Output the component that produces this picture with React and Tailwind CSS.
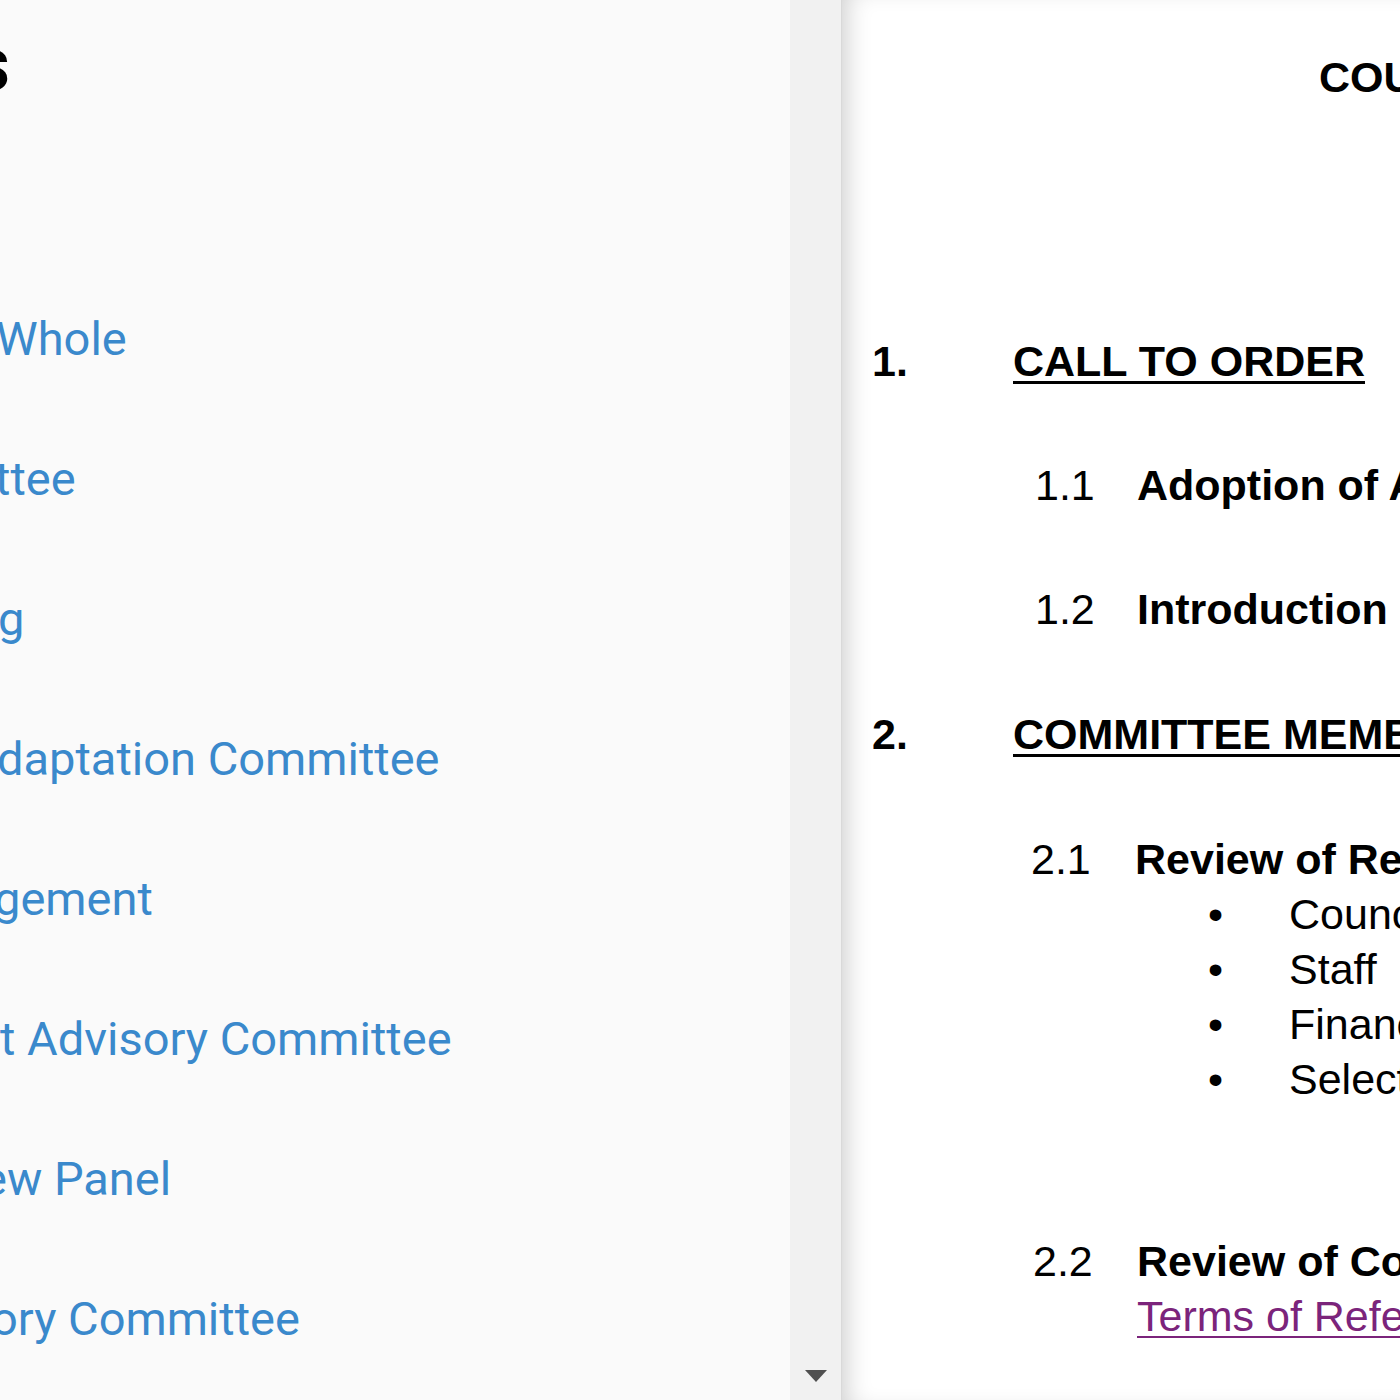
const committees = [
  { text: 'Whole', shift: 'ml-[-4px]' },
  { text: 'ttee', shift: 'ml-[-5px]' },
  { text: 'g', shift: 'ml-[-2px]' },
  { text: 'daptation Committee', shift: 'ml-[-3px]' },
  { text: 'gement', shift: 'ml-[-6px]' },
  { text: 't Advisory Committee', shift: 'ml-0' },
  { text: 'ew Panel', shift: 'ml-[-18px]' },
  { text: 'ory Committee', shift: 'ml-[-9px]' },
];

const bullets = ['Council', 'Staff', 'Finance', 'Selection'];

const App = () => {
  return (
    <div className="w-[1400px] h-[1400px] flex overflow-hidden bg-white">
      {/* Sidebar list, scrolled past its left edge */}
      <div className="w-[790px] shrink-0 bg-[#fafafa] overflow-hidden font-['Roboto',sans-serif] whitespace-nowrap">
        <h2 className="mt-[26px] ml-[-29px] text-[76px] leading-[76px] font-bold text-black">s</h2>
        <ul className="mt-[167px]">
          {committees.map((c, idx) => (
            <li key={idx} className={`${c.shift} text-[47px] leading-[140px] text-[#3a89cc]`}>
              <a href="#">{c.text}</a>
            </li>
          ))}
        </ul>
      </div>

      {/* Scrollbar */}
      <div className="w-[52px] shrink-0 bg-[#f1f1f1] border-r border-r-[#d9d9d9] flex flex-col justify-end items-center pb-[18px]">
        <svg width="22" height="12" viewBox="0 0 22 12">
          <path d="M0 0 H22 L11 12 Z" fill="#505050" />
        </svg>
      </div>

      {/* Agenda document */}
      <div className="flex-1 bg-white overflow-hidden whitespace-nowrap text-black font-['Liberation_Sans',Arial,sans-serif] text-[43px] leading-[55px] shadow-[inset_18px_0_26px_-14px_rgba(0,0,0,0.2)]">
        <div className="pt-[50px] pl-[477px] font-bold">COUNCIL AGENDA</div>

        <div className="mt-[229px] flex">
          <span className="w-[171px] pl-[30px] shrink-0 font-bold">1.</span>
          <span className="font-bold underline decoration-[3px] underline-offset-[5px]">CALL TO ORDER</span>
        </div>

        <div className="mt-[69px] flex">
          <span className="w-[295px] pl-[193px] shrink-0">1.1</span>
          <span className="font-bold">Adoption of Agenda</span>
        </div>

        <div className="mt-[69px] flex">
          <span className="w-[295px] pl-[193px] shrink-0">1.2</span>
          <span className="font-bold">Introduction of Late Items</span>
        </div>

        <div className="mt-[70px] flex">
          <span className="w-[171px] pl-[30px] shrink-0 font-bold">2.</span>
          <span className="font-bold underline decoration-[3px] underline-offset-[5px]">COMMITTEE MEMBERSHIP</span>
        </div>

        <div className="mt-[70px] flex">
          <span className="w-[293px] pl-[189px] shrink-0">2.1</span>
          <span className="font-bold">Review of Representation</span>
        </div>
        <ul>
          {bullets.map((b) => (
            <li key={b} className="flex pl-[366px]">
              <span className="w-[81px] shrink-0">•</span>
              <span>{b}</span>
            </li>
          ))}
        </ul>

        <div className="mt-[127px] flex">
          <span className="w-[295px] pl-[191px] shrink-0">2.2</span>
          <span className="font-bold">Review of Committee</span>
        </div>
        <div className="pl-[295px]">
          <a href="#" className="text-[#7b247b] underline decoration-[2px] underline-offset-[5px]">Terms of Reference</a>
        </div>
      </div>
    </div>
  );
};

export default App;
